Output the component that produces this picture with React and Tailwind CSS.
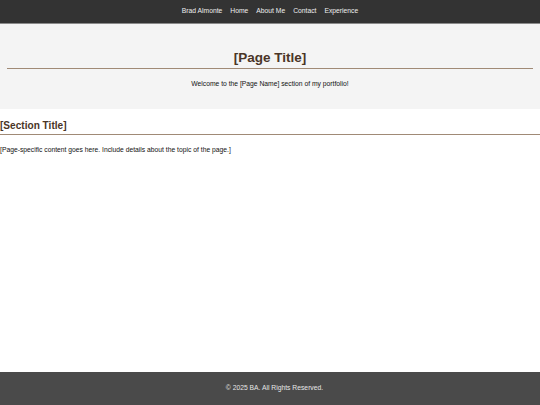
export default function App() {
  const links = ["Brad Almonte", "Home", "About Me", "Contact", "Experience"];

  return (
    <div className="min-h-screen flex flex-col bg-white font-['Liberation_Sans',Arial,sans-serif] text-black">
      {/* header nav */}
      <header className="h-[24px] bg-[#333333] border-b border-[#8a8a8a] flex items-center justify-center gap-[8px]">
        {links.map((l) => (
          <a key={l} className="text-[6.75px] text-[#eeeeee] leading-none">
            {l}
          </a>
        ))}
      </header>

      {/* hero */}
      <section className="bg-[#f4f4f4] px-[7px] pt-[26px] pb-[21px] text-center">
        <h1 className="text-[13.5px] font-bold text-[#4a3527] leading-[15.5px] pb-[2px] border-b border-[#a08a76]">
          [Page Title]
        </h1>
        <p className="mt-[11px] text-[6.75px] leading-[8px] text-[#111]">
          Welcome to the [Page Name] section of my portfolio!
        </p>
      </section>

      {/* main content */}
      <main className="flex-1">
        <h2 className="mt-[11px] text-[10.1px] font-bold text-[#4a3527] leading-[12px] pb-[2px] border-b border-[#a08a76]">
          [Section Title]
        </h2>
        <p className="mt-[11px] text-[6.75px] leading-[8px] text-[#111]">
          [Page-specific content goes here. Include details about the topic of the page.]
        </p>
      </main>

      {/* footer */}
      <footer className="h-[33px] bg-[#4a4a4a] flex items-center justify-center pl-[9px]">
        <p className="text-[6.75px] text-[#e6e6e6]">© 2025 BA. All Rights Reserved.</p>
      </footer>
    </div>
  );
}
